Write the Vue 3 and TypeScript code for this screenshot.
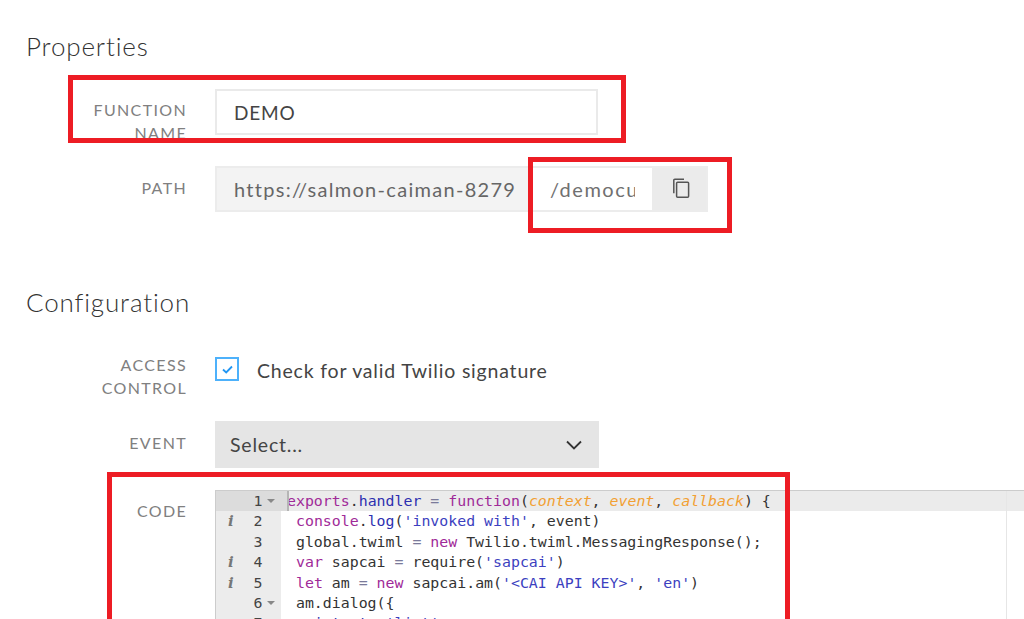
<script setup lang="ts">
interface Token { t: string; c?: string }
interface Line { n: number; info?: boolean; fold?: boolean; active?: boolean; tokens: Token[] }

const lines: Line[] = [
  { n: 1, fold: true, active: true, tokens: [
    { t: 'exports', c: 'kw' }, { t: '.' }, { t: 'handler', c: 'fn' }, { t: ' ' }, { t: '=', c: 'op' }, { t: ' ' },
    { t: 'function', c: 'kw' }, { t: '(' }, { t: 'context', c: 'arg' }, { t: ', ' }, { t: 'event', c: 'arg' }, { t: ', ' },
    { t: 'callback', c: 'arg' }, { t: ') {' }
  ] },
  { n: 2, info: true, tokens: [
    { t: ' ' }, { t: 'console', c: 'kw' }, { t: '.' }, { t: 'log', c: 'fn' }, { t: '(' }, { t: "'invoked with'", c: 'str' }, { t: ', event)' }
  ] },
  { n: 3, tokens: [
    { t: ' global.twiml ' }, { t: '=', c: 'op' }, { t: ' ' }, { t: 'new', c: 'kw' }, { t: ' Twilio.twiml.MessagingResponse();' }
  ] },
  { n: 4, info: true, tokens: [
    { t: ' ' }, { t: 'var', c: 'kw' }, { t: ' sapcai ' }, { t: '=', c: 'op' }, { t: ' require(' }, { t: "'sapcai'", c: 'str' }, { t: ')' }
  ] },
  { n: 5, info: true, tokens: [
    { t: ' ' }, { t: 'let', c: 'kw' }, { t: ' am ' }, { t: '=', c: 'op' }, { t: ' ' }, { t: 'new', c: 'kw' }, { t: ' sapcai.am(' },
    { t: "'<CAI API KEY>'", c: 'str' }, { t: ', ' }, { t: "'en'", c: 'str' }, { t: ')' }
  ] },
  { n: 6, fold: true, tokens: [{ t: ' am.dialog({' }] },
  { n: 7, tokens: [{ t: '   ' }, { t: 'intent', c: 'fn' }, { t: ': ' }, { t: "'list'", c: 'str' }, { t: ',' }] }
]
</script>

<template>
  <div class="page">
    <section class="section">
      <h2 class="heading">Properties</h2>
      <div class="row name-row">
        <label class="label">FUNCTION NAME</label>
        <div class="input name-input">DEMO</div>
      </div>
      <div class="row path-row">
        <label class="label single">PATH</label>
        <div class="path">
          <div class="path-base">https://salmon-caiman-8279</div>
          <div class="path-edit"><span class="path-clip">/democu</span></div>
          <button class="copy" type="button" aria-label="Copy">
            <svg width="20" height="22" viewBox="0 0 20 22" fill="none" stroke="#555" stroke-width="1.5">
              <path d="M13 2.2H3.8a1 1 0 0 0-1 1v13" />
              <rect x="5.6" y="5.2" width="12" height="15" rx="1" />
            </svg>
          </button>
        </div>
      </div>
    </section>

    <section class="section config">
      <h2 class="heading">Configuration</h2>
      <div class="row access-row">
        <label class="label">ACCESS CONTROL</label>
        <div class="check-wrap">
          <span class="check">
            <svg width="13" height="11" viewBox="0 0 13 11" fill="none" stroke="#2196f3" stroke-width="1.8">
              <path d="M2 5.5 5.2 8.5 11 2.5" />
            </svg>
          </span>
          <span class="check-text">Check for valid Twilio signature</span>
        </div>
      </div>
      <div class="row event-row">
        <label class="label single">EVENT</label>
        <div class="select">
          <span>Select...</span>
          <svg width="18" height="10" viewBox="0 0 18 10" fill="none" stroke="#333" stroke-width="1.8">
            <path d="M2 1.5 9 8.5 16 1.5" />
          </svg>
        </div>
      </div>
      <div class="row code-row">
        <label class="label single code-label">CODE</label>
        <div class="editor">
          <div class="gutter">
            <div v-for="l in lines" :key="l.n" class="g-line" :class="{ active: l.active }">
              <span class="info"><template v-if="l.info">i</template></span>
              <span class="num">{{ l.n }}</span>
              <span class="fold" :class="{ on: l.fold }"></span>
            </div>
          </div>
          <div class="code">
            <div v-for="l in lines" :key="l.n" class="c-line" :class="{ active: l.active }">
              <span v-if="l.active" class="cursor"></span>
              <span v-for="(tok, i) in l.tokens" :key="i" :class="tok.c">{{ tok.t }}</span>
            </div>
            <div class="margin"></div>
          </div>
        </div>
      </div>
    </section>

    <div class="mark mark-name"></div>
    <div class="mark mark-path"></div>
    <div class="mark mark-code"></div>
  </div>
</template>

<style>
html, body {
  margin: 0;
  background: #fff;
  overflow: hidden;
}
</style>

<style scoped>
.page {
  position: relative;
  width: 1024px;
  height: 619px;
  overflow: hidden;
  background: #fff;
  font-family: Lato, "Open Sans", sans-serif;
  color: #333;
}
.section {
  padding-left: 26px;
}
.heading {
  margin: 0;
  padding-top: 30px;
  font-size: 26px;
  line-height: 32px;
  font-weight: 300;
  color: #333;
  letter-spacing: 0.85px;
}
.row {
  display: flex;
  align-items: flex-start;
}
.label {
  flex: none;
  box-sizing: border-box;
  width: 161px;
  padding-left: 55px;
  margin-right: 28px;
  text-align: right;
  font-size: 16px;
  line-height: 23px;
  letter-spacing: 1.35px;
  color: #808080;
}
.name-row {
  margin-top: 27px;
  height: 46px;
}
.name-row .label {
  padding-top: 9px;
}
.input {
  box-sizing: border-box;
  width: 383px;
  height: 46px;
  border: 2px solid #eaeaea;
  background: #fff;
  padding-left: 17px;
  font-size: 19px;
  line-height: 43px;
  letter-spacing: 0.8px;
  color: #444;
}
.path-row {
  margin-top: 31px;
  height: 46px;
}
.label.single {
  padding-top: 10px;
}
.path {
  display: flex;
  height: 46px;
  box-sizing: border-box;
  background: #f3f3f3;
  border: 2px solid #ececec;
}
.path-base {
  box-sizing: border-box;
  width: 316px;
  padding-left: 17px;
  font-size: 20px;
  line-height: 43px;
  letter-spacing: 1.3px;
  color: #666;
  white-space: nowrap;
  overflow: hidden;
}
.path-edit {
  box-sizing: border-box;
  width: 119px;
  padding-left: 17px;
  background: #fff;
  font-size: 20px;
  line-height: 43px;
  letter-spacing: 1.5px;
  color: #707070;
}
.path-clip {
  display: block;
  width: 85px;
  white-space: nowrap;
  overflow: hidden;
}
.copy {
  flex: none;
  width: 54px;
  border: 0;
  padding: 0 0 3px 3px;
  background: #ebebeb;
  display: flex;
  align-items: center;
  justify-content: center;
}
.config .heading {
  padding-top: 74px;
}
.access-row {
  margin-top: 35px;
  height: 46px;
}
.check-wrap {
  display: flex;
  align-items: flex-start;
  margin-top: 4px;
}
.check {
  box-sizing: border-box;
  width: 24px;
  height: 24px;
  border: 2px solid #4db1fb;
  display: flex;
  align-items: center;
  justify-content: center;
  background: #fff;
}
.check-text {
  margin-left: 18px;
  font-size: 19.5px;
  line-height: 28px;
  letter-spacing: 0.8px;
  color: #444;
}
.event-row {
  margin-top: 22px;
  height: 47px;
}
.select {
  box-sizing: border-box;
  width: 384px;
  height: 47px;
  background: #e5e5e5;
  display: flex;
  align-items: center;
  justify-content: space-between;
  padding: 0 16px 0 15px;
  font-size: 19.5px;
  letter-spacing: 0.8px;
  color: #444;
}
.code-row {
  margin-top: 22px;
}
.label.code-label {
  padding-top: 9px;
}
.editor {
  flex: none;
  display: flex;
  width: 809px;
  height: 200px;
  border-top: 1px solid #ccc;
  border-left: 1px solid #ccc;
  box-sizing: border-box;
  font-family: "DejaVu Sans Mono", monospace;
  font-size: 14.88px;
  line-height: 20.4px;
  color: #333;
}
.gutter {
  flex: none;
  width: 65px;
  background: #ececec;
  color: #444;
}
.g-line {
  display: flex;
  align-items: center;
  height: 20.4px;
}
.g-line.active {
  background: #dcdcdc;
}
.info {
  width: 24px;
  margin-left: 12px;
  font-family: "DejaVu Serif", serif;
  font-style: italic;
  font-weight: 700;
  font-size: 15px;
  color: #777;
}
.num {
  width: 12px;
  text-align: center;
}
.fold {
  width: 0;
  height: 0;
  margin-left: 3px;
}
.fold.on {
  border-left: 4px solid transparent;
  border-right: 4px solid transparent;
  border-top: 4px solid #888;
}
.code {
  position: relative;
  flex: 1;
  min-width: 0;
  white-space: pre;
}
.c-line {
  position: relative;
  height: 20.4px;
  padding-left: 6px;
}
.c-line.active {
  background: linear-gradient(to right, #dcdcdc 6px, #ebebeb 6px);
}
.cursor {
  position: absolute;
  left: 6px;
  top: 0;
  width: 2px;
  height: 20px;
  background: #b5b5b5;
}
.margin {
  position: absolute;
  left: 725px;
  top: 0;
  bottom: 0;
  width: 1px;
  background: #e6e6e6;
}
.kw { color: #a02a98; }
.fn { color: #2d2fb0; }
.op { color: #7a7a9a; }
.arg { color: #f2a033; font-style: italic; }
.str { color: #3c3fc0; }
.mark {
  position: absolute;
  box-sizing: border-box;
  border: 5px solid #ed1c24;
  pointer-events: none;
}
.mark-name {
  left: 68px;
  top: 75px;
  width: 558px;
  height: 68px;
}
.mark-path {
  left: 528px;
  top: 157px;
  width: 204px;
  height: 76px;
}
.mark-code {
  left: 107px;
  top: 472px;
  width: 683px;
  height: 160px;
}
</style>
